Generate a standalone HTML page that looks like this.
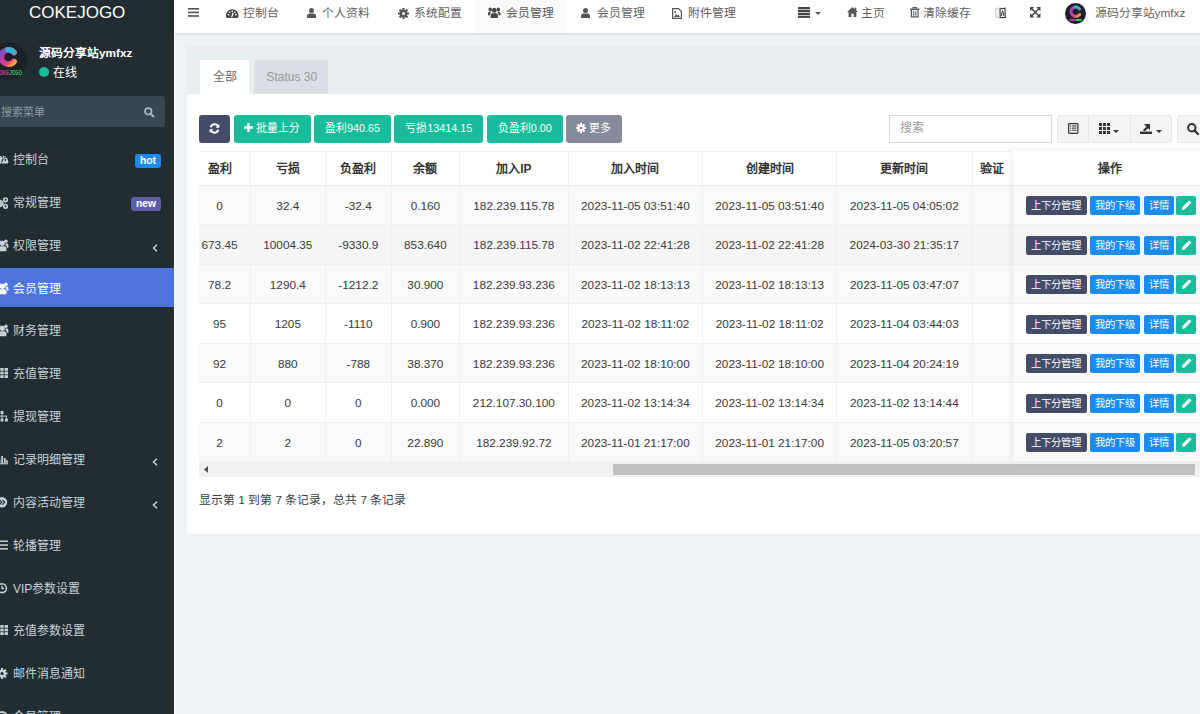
<!DOCTYPE html><html lang="zh-CN"><head><meta charset="utf-8"><style>
*{box-sizing:border-box}
html,body{margin:0;padding:0}
body{width:1200px;height:714px;overflow:hidden;position:relative;background:#f0f3f6;font-family:"Liberation Sans",sans-serif;font-size:12px;color:#333}
.abs{position:absolute;white-space:nowrap}
svg{position:absolute;overflow:visible}
#sidebar{position:absolute;left:0;top:0;width:174px;height:714px;background:#222d32;overflow:hidden}
#whiteline{position:absolute;left:174px;top:0;width:1px;height:714px;background:#fff}
#header{position:absolute;left:175px;top:0;width:1025px;height:35px;background:#fff;border-bottom:2px solid #dde1e5}
.mi{position:absolute;left:0;width:174px;height:39px;color:#c6d2d8}
.mi .t{position:absolute;left:13px;top:12.5px;font-size:12px;line-height:17px;white-space:nowrap}
.mi.active{background:#4e73df;color:#fff}
.badge{position:absolute;color:#fff;font-weight:bold;font-size:10.4px;line-height:14px;text-align:center;border-radius:3px;height:14px}
.nt{position:absolute;top:4.8px;line-height:17px;font-size:11.8px;color:#5e5e5e;white-space:nowrap}
#panel{position:absolute;left:187px;top:46px;width:1013px;height:488px;background:#fff}
#ph{position:absolute;left:0;top:0;width:1014px;height:48px;background:#e8edf0}
.tab{position:absolute;top:14px;height:34px;font-size:12px;line-height:17px}
.btn{position:absolute;top:115px;height:27.5px;border-radius:3px;color:#fff;font-size:10.8px;line-height:27px;text-align:center;white-space:nowrap}
.g{background:#18bc9c}
.ob{position:absolute;height:18.8px;border-radius:2px;color:#fff;font-size:10.4px;line-height:20px;text-align:center;white-space:nowrap}
</style></head><body>
<div id="sidebar">
<div class="abs" style="left:29px;top:3px;font-size:17px;color:#fff;line-height:20px">COKEJOGO</div>
<svg style="left:-11px;top:42px" width="38" height="38" viewBox="0 0 38 38">
<defs><linearGradient id="cg" x1="0" y1="0" x2="0.9" y2="1"><stop offset="0" stop-color="#7a4fd0"/><stop offset="0.45" stop-color="#c040a0"/><stop offset="0.75" stop-color="#e8407a"/><stop offset="1" stop-color="#f0a048"/></linearGradient></defs>
<circle cx="19" cy="19" r="18.7" fill="#1b2126"/>
<path d="M25 10.4 A7.2 7.2 0 1 0 25 19.6" fill="none" stroke="url(#cg)" stroke-width="5.8" stroke-linecap="round"/>
<path d="M25 10.4 A7.2 7.2 0 0 0 18.9 7.8" fill="none" stroke="#3ab0d0" stroke-width="5.4" stroke-linecap="round"/>
<text x="7" y="33" font-family="Liberation Sans" font-weight="bold" font-size="6.6" fill="#c83aa8" textLength="13" lengthAdjust="spacingAndGlyphs">COKE</text>
<text x="20.5" y="33" font-family="Liberation Sans" font-weight="bold" font-size="6.6" fill="#2ecc60" textLength="12.5" lengthAdjust="spacingAndGlyphs">JOGO</text>
</svg>
<div class="abs" style="left:39px;top:45px;font-size:11.8px;font-weight:bold;color:#fff;line-height:16px">源码分享站ymfxz</div>
<div class="abs" style="left:39px;top:67px;width:10px;height:10px;border-radius:50%;background:#18bc9c"></div>
<div class="abs" style="left:53px;top:64.5px;font-size:12px;color:#fff;line-height:17px">在线</div>
<div class="abs" style="left:-10px;top:96px;width:175px;height:31px;background:#374850;border-radius:3px"></div>
<div class="abs" style="left:1px;top:103.5px;font-size:11px;color:#8a9ba3;line-height:17px">搜索菜单</div>
<svg style="left:144px;top:106.5px" width="10.5" height="10.5" viewBox="0 0 12 12"><circle cx="4.9" cy="4.9" r="3.7" fill="none" stroke="#a9b6bc" stroke-width="2"/><path d="M7.6 7.6 L10.8 10.8" stroke="#a9b6bc" stroke-width="2.4" stroke-linecap="round"/></svg>
<div class="mi" style="top:139.4px">
<svg style="left:-4px;top:14.5px" width="12" height="11" viewBox="0 0 12 11"><path d="M0.52 9.5 A6 6 0 1 1 12 9.5 Z" fill="#c6d2d8"/><circle cx="9.5" cy="6" r="0.9" fill="#222d32"/><circle cx="6.2" cy="2.6" r="0.9" fill="#222d32"/><circle cx="8.8" cy="3.6" r="0.8" fill="#222d32"/><path d="M5.6 8.4 L7.2 4.4" stroke="#222d32" stroke-width="1.2"/></svg>
<div class="t">控制台</div>
</div>
<div class="mi" style="top:182.3px">
<svg style="left:-4px;top:14.5px" width="12" height="11" viewBox="0 0 12 11"><g fill="none" stroke="#c6d2d8" stroke-width="1.6"><circle cx="4" cy="6.5" r="2.6"/><circle cx="9.5" cy="2.8" r="1.8"/><circle cx="9.5" cy="9.3" r="1.8"/></g><g fill="#c6d2d8"><rect x="3.2" y="2.8" width="1.6" height="7.4"/><rect x="0.3" y="5.7" width="7.4" height="1.6"/></g></svg>
<div class="t">常规管理</div>
</div>
<div class="mi" style="top:225.2px">
<svg style="left:-4.2px;top:13.5px" width="12.5" height="12.5" viewBox="0 0 12.5 12.5"><g fill="#c6d2d8"><circle cx="6.3" cy="4.3" r="2.6"/><path d="M2.2 12.3 L2.2 9.3 Q2.2 7.2 4.3 7.2 L8.3 7.2 Q10.4 7.2 10.4 9.3 L10.4 12.3 Z"/><circle cx="9.9" cy="2.2" r="1.8"/><path d="M9.4 4.6 L11.2 4.6 Q12.4 4.6 12.4 6 L12.4 8.8 L11 8.8 Q10.8 7 9.6 6.3 Z"/><circle cx="2.7" cy="2.2" r="1.8"/><path d="M3.2 4.6 L1.4 4.6 Q0.2 4.6 0.2 6 L0.2 8.8 L1.6 8.8 Q1.8 7 3 6.3 Z"/></g></svg>
<div class="t">权限管理</div>
<svg style="left:152px;top:19px" width="6" height="8" viewBox="0 0 6 8"><path d="M5 0.8 L1.5 4 L5 7.2" fill="none" stroke="#c6d2d8" stroke-width="1.5"/></svg>
</div>
<div class="mi active" style="top:268.0px">
<svg style="left:-4.2px;top:13.5px" width="12.5" height="12.5" viewBox="0 0 12.5 12.5"><g fill="#fff"><circle cx="6.3" cy="4.3" r="2.6"/><path d="M2.2 12.3 L2.2 9.3 Q2.2 7.2 4.3 7.2 L8.3 7.2 Q10.4 7.2 10.4 9.3 L10.4 12.3 Z"/><circle cx="9.9" cy="2.2" r="1.8"/><path d="M9.4 4.6 L11.2 4.6 Q12.4 4.6 12.4 6 L12.4 8.8 L11 8.8 Q10.8 7 9.6 6.3 Z"/><circle cx="2.7" cy="2.2" r="1.8"/><path d="M3.2 4.6 L1.4 4.6 Q0.2 4.6 0.2 6 L0.2 8.8 L1.6 8.8 Q1.8 7 3 6.3 Z"/></g></svg>
<div class="t">会员管理</div>
</div>
<div class="mi" style="top:310.9px">
<svg style="left:-4.2px;top:13.5px" width="12.5" height="12.5" viewBox="0 0 12.5 12.5"><g fill="#c6d2d8"><circle cx="6.3" cy="4.3" r="2.6"/><path d="M2.2 12.3 L2.2 9.3 Q2.2 7.2 4.3 7.2 L8.3 7.2 Q10.4 7.2 10.4 9.3 L10.4 12.3 Z"/><circle cx="9.9" cy="2.2" r="1.8"/><path d="M9.4 4.6 L11.2 4.6 Q12.4 4.6 12.4 6 L12.4 8.8 L11 8.8 Q10.8 7 9.6 6.3 Z"/><circle cx="2.7" cy="2.2" r="1.8"/><path d="M3.2 4.6 L1.4 4.6 Q0.2 4.6 0.2 6 L0.2 8.8 L1.6 8.8 Q1.8 7 3 6.3 Z"/></g></svg>
<div class="t">财务管理</div>
</div>
<div class="mi" style="top:353.7px">
<svg style="left:-4px;top:14.5px" width="12" height="11" viewBox="0 0 12 11"><g fill="#c6d2d8"><rect x="0" y="0" width="3.4" height="2.8"/><rect x="4.3" y="0" width="3.4" height="2.8"/><rect x="8.6" y="0" width="3.4" height="2.8"/><rect x="0" y="3.6" width="3.4" height="2.8"/><rect x="4.3" y="3.6" width="3.4" height="2.8"/><rect x="8.6" y="3.6" width="3.4" height="2.8"/><rect x="0" y="7.2" width="3.4" height="2.8"/><rect x="4.3" y="7.2" width="3.4" height="2.8"/><rect x="8.6" y="7.2" width="3.4" height="2.8"/></g></svg>
<div class="t">充值管理</div>
</div>
<div class="mi" style="top:396.6px">
<svg style="left:-4px;top:14.5px" width="12" height="11" viewBox="0 0 12 11"><g fill="#c6d2d8"><rect x="4.6" y="0" width="2.8" height="3"/><rect x="0.2" y="7.5" width="2.8" height="3"/><rect x="4.6" y="7.5" width="2.8" height="3"/><rect x="9" y="7.5" width="2.8" height="3"/><rect x="1.2" y="4.6" width="9.6" height="1"/><rect x="1.2" y="4.6" width="0.9" height="3"/><rect x="5.5" y="2.8" width="0.9" height="4.8"/><rect x="9.9" y="4.6" width="0.9" height="3"/></g></svg>
<div class="t">提现管理</div>
</div>
<div class="mi" style="top:439.4px">
<svg style="left:-4px;top:14.5px" width="12" height="11" viewBox="0 0 12 11"><g fill="#c6d2d8"><rect x="0" y="9.2" width="12" height="1.1"/><rect x="0" y="0" width="1.1" height="10.3"/><rect x="2.5" y="5" width="1.8" height="4"/><rect x="5.2" y="2" width="1.8" height="7"/><rect x="7.9" y="4" width="1.8" height="5"/><rect x="10.2" y="6" width="1.5" height="3"/></g></svg>
<div class="t">记录明细管理</div>
<svg style="left:152px;top:19px" width="6" height="8" viewBox="0 0 6 8"><path d="M5 0.8 L1.5 4 L5 7.2" fill="none" stroke="#c6d2d8" stroke-width="1.5"/></svg>
</div>
<div class="mi" style="top:482.2px">
<svg style="left:-4px;top:14.5px" width="12" height="11" viewBox="0 0 12 11"><circle cx="6" cy="5.2" r="5.2" fill="#c6d2d8"/><path d="M3.5 2.8 L5.8 5.2 L3.5 7.6 M6.4 2.8 L8.7 5.2 L6.4 7.6" fill="none" stroke="#222d32" stroke-width="1.2"/></svg>
<div class="t">内容活动管理</div>
<svg style="left:152px;top:19px" width="6" height="8" viewBox="0 0 6 8"><path d="M5 0.8 L1.5 4 L5 7.2" fill="none" stroke="#c6d2d8" stroke-width="1.5"/></svg>
</div>
<div class="mi" style="top:525.1px">
<svg style="left:-4px;top:14.5px" width="12" height="11" viewBox="0 0 12 11"><g fill="#c6d2d8"><rect x="0" y="0.5" width="12" height="1.5"/><rect x="0" y="4.3" width="12" height="1.5"/><rect x="0" y="8.1" width="12" height="1.5"/></g></svg>
<div class="t">轮播管理</div>
</div>
<div class="mi" style="top:568.0px">
<svg style="left:-4px;top:14.5px" width="12" height="11" viewBox="0 0 12 11"><circle cx="6" cy="5.2" r="4.4" fill="none" stroke="#c6d2d8" stroke-width="1.6"/><path d="M6 2.8 L6 5.5 L8 5.5" fill="none" stroke="#c6d2d8" stroke-width="1.3"/></svg>
<div class="t">VIP参数设置</div>
</div>
<div class="mi" style="top:610.8px">
<svg style="left:-4px;top:14.5px" width="12" height="11" viewBox="0 0 12 11"><g fill="#c6d2d8"><rect x="0" y="0" width="3.4" height="2.8"/><rect x="4.3" y="0" width="3.4" height="2.8"/><rect x="8.6" y="0" width="3.4" height="2.8"/><rect x="0" y="3.6" width="3.4" height="2.8"/><rect x="4.3" y="3.6" width="3.4" height="2.8"/><rect x="8.6" y="3.6" width="3.4" height="2.8"/><rect x="0" y="7.2" width="3.4" height="2.8"/><rect x="4.3" y="7.2" width="3.4" height="2.8"/><rect x="8.6" y="7.2" width="3.4" height="2.8"/></g></svg>
<div class="t">充值参数设置</div>
</div>
<div class="mi" style="top:653.7px">
<svg style="left:-4px;top:14.5px" width="12" height="11" viewBox="0 0 12 11"><g fill="#c6d2d8"><circle cx="6" cy="5.5" r="3.8"/><rect x="4.9" y="0" width="2.2" height="11"/><rect x="0.5" y="4.4" width="11" height="2.2"/><rect x="4.9" y="0" width="2.2" height="11" transform="rotate(45 6 5.5)"/><rect x="4.9" y="0" width="2.2" height="11" transform="rotate(-45 6 5.5)"/></g><circle cx="6" cy="5.5" r="1.6" fill="#222d32"/></svg>
<div class="t">邮件消息通知</div>
</div>
<div class="mi" style="top:696.5px">
<svg style="left:-4px;top:14.5px" width="12" height="11" viewBox="0 0 12 11"><circle cx="6" cy="6" r="5" fill="none" stroke="#c6d2d8" stroke-width="1.8"/></svg>
<div class="t">会员管理</div>
</div>
<div class="badge" style="left:135px;top:153.5px;width:26px;background:#1a8cf0">hot</div>
<div class="badge" style="left:131px;top:196.5px;width:30px;background:#605ca8">new</div>
</div>
<div id="whiteline"></div>
<div id="header">
<svg style="left:12.5px;top:8px" width="11" height="9" viewBox="0 0 11 9"><rect x="0" y="0" width="11" height="1.6" fill="#555"/><rect x="0" y="3.6" width="11" height="1.6" fill="#555"/><rect x="0" y="7.2" width="11" height="1.6" fill="#555"/></svg>
<svg style="left:50.5px;top:8.5px" width="12.5" height="9" viewBox="0 0 12.5 9"><path d="M0.52 9 A6.25 6.25 0 1 1 11.98 9 Z" fill="#444"/><circle cx="2.6" cy="5.6" r="0.9" fill="#fff"/><circle cx="6.25" cy="2.3" r="0.9" fill="#fff"/><circle cx="3.6" cy="3.2" r="0.8" fill="#fff"/><circle cx="9.9" cy="5.6" r="0.9" fill="#fff"/><circle cx="8.9" cy="3.2" r="0.8" fill="#fff"/><path d="M5.6 8.2 L7.2 4" stroke="#fff" stroke-width="1.3"/></svg>
<div class="nt" style="left:67.5px">控制台</div>
<svg style="left:132px;top:8px" width="9" height="10" viewBox="0 0 9 10"><circle cx="4.5" cy="2.6" r="2.5" fill="#555"/><path d="M0 10 L0 7.6 Q0 5.6 2.2 5.4 L6.8 5.4 Q9 5.6 9 7.6 L9 10 Z" fill="#555"/></svg>
<div class="nt" style="left:147px">个人资料</div>
<svg style="left:223px;top:7.5px" width="11" height="11" viewBox="0 0 11 11"><g fill="#555"><circle cx="5.5" cy="5.5" r="3.6"/><rect x="4.4" y="0" width="2.2" height="11"/><rect x="0" y="4.4" width="11" height="2.2"/><rect x="4.4" y="0" width="2.2" height="11" transform="rotate(45 5.5 5.5)"/><rect x="4.4" y="0" width="2.2" height="11" transform="rotate(-45 5.5 5.5)"/></g><circle cx="5.5" cy="5.5" r="1.5" fill="#fff"/></svg>
<div class="nt" style="left:238.5px">系统配置</div>
<div class="abs" style="left:299.5px;top:0;width:91.5px;height:33px;background:#f9f9f9"></div>
<svg style="left:313px;top:7px" width="12.5" height="11" viewBox="0 0 12.5 10" preserveAspectRatio="none"><g fill="#444"><circle cx="6.25" cy="3" r="2.3"/><circle cx="2.2" cy="2.2" r="1.7"/><circle cx="10.3" cy="2.2" r="1.7"/><path d="M2.6 10 L2.6 7.8 Q2.6 5.6 4.6 5.6 L7.9 5.6 Q9.9 5.6 9.9 7.8 L9.9 10 Z"/><path d="M0 7.6 L0 6 Q0 4.4 1.5 4.4 L3.2 4.4 Q2 5.4 2 7.2 L2 7.6 Z"/><path d="M12.5 7.6 L12.5 6 Q12.5 4.4 11 4.4 L9.3 4.4 Q10.5 5.4 10.5 7.2 L10.5 7.6 Z"/></g></svg>
<div class="nt" style="left:330.5px;color:#555">会员管理</div>
<svg style="left:406px;top:8px" width="9" height="10" viewBox="0 0 9 10"><circle cx="4.5" cy="2.6" r="2.5" fill="#555"/><path d="M0 10 L0 7.6 Q0 5.6 2.2 5.4 L6.8 5.4 Q9 5.6 9 7.6 L9 10 Z" fill="#555"/></svg>
<div class="nt" style="left:422px">会员管理</div>
<svg style="left:497px;top:7.5px" width="10" height="11" viewBox="0 0 10 11"><path d="M0.6 0.6 L6.5 0.6 L9.4 3.5 L9.4 10.4 L0.6 10.4 Z" fill="none" stroke="#555" stroke-width="1.2"/><path d="M2 9 L4 6 L5.5 7.5 L6.5 6.5 L8 9 Z" fill="#555"/><circle cx="3.2" cy="4" r="1" fill="#555"/></svg>
<div class="nt" style="left:513px">附件管理</div>
<svg style="left:622.5px;top:7px" width="12" height="11" viewBox="0 0 12 11"><g fill="#444"><rect x="0" y="0" width="12" height="2.2"/><rect x="0" y="2.9" width="12" height="2.2"/><rect x="0" y="5.8" width="12" height="2.2"/><rect x="0" y="8.7" width="12" height="2.2"/></g></svg>
<svg style="left:640px;top:12px" width="6" height="3" viewBox="0 0 6 3"><path d="M0 0 L6 0 L3 3 Z" fill="#555"/></svg>
<svg style="left:672px;top:7.2px" width="11" height="10" viewBox="0 0 11 10"><path d="M5.5 0 L11 5 L9.4 5 L9.4 10 L6.6 10 L6.6 6.8 L4.4 6.8 L4.4 10 L1.6 10 L1.6 5 L0 5 Z" fill="#555"/><rect x="7.8" y="0.6" width="1.5" height="2.8" fill="#555"/></svg>
<div class="nt" style="left:686px">主页</div>
<svg style="left:734.6px;top:7.2px" width="9.5" height="10.5" viewBox="0 0 9.5 10.5"><rect x="0" y="1.6" width="9.5" height="1.4" fill="#555"/><path d="M3 1.8 L3 0.6 L6.5 0.6 L6.5 1.8" fill="none" stroke="#555" stroke-width="1.1"/><path d="M1.4 3 L1.4 9.9 L8.1 9.9 L8.1 3" fill="none" stroke="#555" stroke-width="1.2"/><rect x="3.2" y="4" width="1" height="4.8" fill="#555"/><rect x="5.3" y="4" width="1" height="4.8" fill="#555"/></svg>
<div class="nt" style="left:747.5px">清除缓存</div>
<svg style="left:819.5px;top:7px" width="11" height="12" viewBox="0 0 11 12"><path d="M0.5 1.5 L6 1 L6 10.5 L1 10 Z" fill="#f4f4f4" stroke="#bbb" stroke-width="0.8"/><path d="M5 2 L10 1.2 L10.3 10.6 L5.2 10.4 Z" fill="#fff" stroke="#333" stroke-width="1.1"/><path d="M6.2 9 L7.6 3.6 L8.9 9" fill="none" stroke="#333" stroke-width="1"/><path d="M3 11.5 L8 11.5" stroke="#ddd" stroke-width="0.8"/></svg>
<svg style="left:855px;top:7.2px" width="10.5" height="10.5" viewBox="0 0 10.5 10.5"><g fill="#444"><path d="M0 0 L4.2 0 L0 4.2 Z"/><path d="M10.5 0 L6.3 0 L10.5 4.2 Z"/><path d="M0 10.5 L4.2 10.5 L0 6.3 Z"/><path d="M10.5 10.5 L6.3 10.5 L10.5 6.3 Z"/></g><path d="M1.5 1.5 L9 9 M9 1.5 L1.5 9" stroke="#444" stroke-width="1.5"/></svg>
<svg style="left:889.5px;top:2.5px" width="21" height="21" viewBox="0 0 38 38">
<circle cx="19" cy="19" r="19" fill="#1b2126"/>
<path d="M26.4 10.8 A8.5 8.5 0 1 0 26.4 20.6" fill="none" stroke="url(#cg)" stroke-width="5.5" stroke-linecap="round"/>
<path d="M26.4 10.8 A8.5 8.5 0 0 0 18 7.2" fill="none" stroke="#3ab0d0" stroke-width="5" stroke-linecap="round"/>
<rect x="8" y="29" width="10" height="3.5" fill="#c83aa8"/><rect x="19" y="29" width="11" height="3.5" fill="#2ecc60"/>
</svg>
<div class="nt" style="left:919.5px">源码分享站ymfxz</div>
</div>
<div id="panel"><div id="ph"></div></div>
<div class="abs" style="left:200px;top:60px;width:48.6px;height:34px;background:#fff;border-radius:2px 2px 0 0"></div>
<div class="abs" style="left:212.5px;top:69px;line-height:17px;color:#6a6a6a">全部</div>
<div class="abs" style="left:254px;top:60px;width:74px;height:34px;background:#d9dfe5;border-radius:2px 2px 0 0"></div>
<div class="abs" style="left:266.5px;top:69px;line-height:17px;color:#999">Status 30</div>
<div class="btn" style="left:199px;width:31px;background:#444c69"></div>
<svg style="left:208.7px;top:122.5px;transform:scale(-1,1)" width="11" height="11" viewBox="0 0 11 11"><path d="M9.3 4.2 A4 4 0 0 0 2 3.2" fill="none" stroke="#fff" stroke-width="2"/><path d="M0.6 1 L0.6 4.8 L4.4 4.8 Z" fill="#fff"/><path d="M1.7 6.8 A4 4 0 0 0 9 7.8" fill="none" stroke="#fff" stroke-width="2"/><path d="M10.4 10 L10.4 6.2 L6.6 6.2 Z" fill="#fff"/></svg>
<div class="btn g" style="left:233.5px;width:77px"></div>
<svg style="left:244.3px;top:123px" width="9" height="9" viewBox="0 0 9 9"><rect x="3.3" y="0" width="2.4" height="9" fill="#fff"/><rect x="0" y="3.3" width="9" height="2.4" fill="#fff"/></svg>
<div class="abs" style="left:256px;top:120px;line-height:17px;color:#fff;font-size:10.8px">批量上分</div>
<div class="btn g" style="left:314.3px;width:76.5px">盈利940.65</div>
<div class="btn g" style="left:394px;width:89.4px">亏损13414.15</div>
<div class="btn g" style="left:487px;width:75.6px">负盈利0.00</div>
<div class="btn" style="left:566.2px;width:55.6px;background:#858a9d;padding-left:13px">更多</div>
<svg style="left:576px;top:122.7px" width="10" height="10" viewBox="0 0 11 11"><g fill="#fff"><circle cx="5.5" cy="5.5" r="3.6"/><rect x="4.4" y="0" width="2.2" height="11"/><rect x="0" y="4.4" width="11" height="2.2"/><rect x="4.4" y="0" width="2.2" height="11" transform="rotate(45 5.5 5.5)"/><rect x="4.4" y="0" width="2.2" height="11" transform="rotate(-45 5.5 5.5)"/></g><circle cx="5.5" cy="5.5" r="1.5" fill="#858a9d"/></svg>
<div class="abs" style="left:889px;top:115px;width:163px;height:28px;border:1px solid #d2d6de;background:#fff"></div>
<div class="abs" style="left:900px;top:120px;line-height:17px;color:#999">搜索</div>
<div class="abs" style="left:1056.5px;top:115px;width:115px;height:27.5px;border:1px solid #e4e4e4;background:#f4f4f4;border-radius:3px"></div>
<div class="abs" style="left:1088px;top:115px;width:1px;height:27.5px;background:#e4e4e4"></div>
<div class="abs" style="left:1129.5px;top:115px;width:1px;height:27.5px;background:#e4e4e4"></div>
<div class="abs" style="left:1176.5px;top:115px;width:40px;height:27.5px;border:1px solid #e4e4e4;background:#f4f4f4;border-radius:3px"></div>
<svg style="left:1068px;top:123px" width="10.5" height="11" viewBox="0 0 10.5 11"><rect x="0.6" y="0.6" width="9.3" height="9.8" rx="0.8" fill="none" stroke="#333" stroke-width="1.2"/><g fill="#333"><rect x="2" y="2.5" width="1.2" height="1"/><rect x="2" y="4.6" width="1.2" height="1"/><rect x="2" y="6.7" width="1.2" height="1"/><rect x="4" y="2.5" width="4.5" height="1"/><rect x="4" y="4.6" width="4.5" height="1"/><rect x="4" y="6.7" width="4.5" height="1"/></g></svg>
<svg style="left:1098.5px;top:123px" width="11" height="11" viewBox="0 0 11 11"><g fill="#333"><rect x="0" y="0" width="3" height="3"/><rect x="4" y="0" width="3" height="3"/><rect x="8" y="0" width="3" height="3"/><rect x="0" y="4" width="3" height="3"/><rect x="4" y="4" width="3" height="3"/><rect x="8" y="4" width="3" height="3"/><rect x="0" y="8" width="3" height="3"/><rect x="4" y="8" width="3" height="3"/><rect x="8" y="8" width="3" height="3"/></g></svg>
<svg style="left:1113px;top:130px" width="6" height="3" viewBox="0 0 6 3"><path d="M0 0 L6 0 L3 3 Z" fill="#333"/></svg>
<svg style="left:1140px;top:122.5px" width="12" height="11" viewBox="0 0 12 11"><g fill="#333"><rect x="0" y="8.6" width="12" height="2.4"/><path d="M4 1 L10 1 L10 7 L8.2 5.2 L4.5 8.5 L2.9 7 L6.6 3.7 Z"/></g></svg>
<svg style="left:1155.5px;top:130px" width="6" height="3" viewBox="0 0 6 3"><path d="M0 0 L6 0 L3 3 Z" fill="#333"/></svg>
<svg style="left:1187px;top:122.5px" width="12" height="12" viewBox="0 0 12 12"><circle cx="4.8" cy="4.8" r="3.7" fill="none" stroke="#333" stroke-width="2"/><path d="M7.6 7.6 L11 11" stroke="#333" stroke-width="2.4" stroke-linecap="round"/></svg>
<div id="tbl" style="position:absolute;left:199px;top:151px;width:1001px;height:326px;overflow:hidden">
<div class="abs" style="left:0;top:0;width:1001px;height:1px;background:#f0f0f0"></div>
<div class="abs" style="left:0;top:33.5px;width:1001px;height:1.5px;background:#e8e8e8"></div>
<div class="abs" style="left:0;top:34.50px;width:1001px;height:39.5px;background:#f9f9f9;border-bottom:1px solid #f0f0f0"></div>
<div class="abs" style="left:-10.40px;top:46.50px;width:61.80px;text-align:center;line-height:17px;color:#3a3a3a;font-size:11.8px">0</div>
<div class="abs" style="left:51.40px;top:46.50px;width:74.90px;text-align:center;line-height:17px;color:#3a3a3a;font-size:11.8px">32.4</div>
<div class="abs" style="left:126.30px;top:46.50px;width:66.00px;text-align:center;line-height:17px;color:#3a3a3a;font-size:11.8px">-32.4</div>
<div class="abs" style="left:192.30px;top:46.50px;width:68.20px;text-align:center;line-height:17px;color:#3a3a3a;font-size:11.8px">0.160</div>
<div class="abs" style="left:260.50px;top:46.50px;width:108.75px;text-align:center;line-height:17px;color:#3a3a3a;font-size:11.8px">182.239.115.78</div>
<div class="abs" style="left:369.25px;top:46.50px;width:134.25px;text-align:center;line-height:17px;color:#3a3a3a;font-size:11.8px">2023-11-05 03:51:40</div>
<div class="abs" style="left:503.50px;top:46.50px;width:134.30px;text-align:center;line-height:17px;color:#3a3a3a;font-size:11.8px">2023-11-05 03:51:40</div>
<div class="abs" style="left:637.80px;top:46.50px;width:135.20px;text-align:center;line-height:17px;color:#3a3a3a;font-size:11.8px">2023-11-05 04:05:02</div>
<div class="abs" style="left:0;top:74.00px;width:1001px;height:39.5px;background:#f5f5f5;border-bottom:1px solid #f0f0f0"></div>
<div class="abs" style="left:-10.40px;top:86.00px;width:61.80px;text-align:center;line-height:17px;color:#3a3a3a;font-size:11.8px">673.45</div>
<div class="abs" style="left:51.40px;top:86.00px;width:74.90px;text-align:center;line-height:17px;color:#3a3a3a;font-size:11.8px">10004.35</div>
<div class="abs" style="left:126.30px;top:86.00px;width:66.00px;text-align:center;line-height:17px;color:#3a3a3a;font-size:11.8px">-9330.9</div>
<div class="abs" style="left:192.30px;top:86.00px;width:68.20px;text-align:center;line-height:17px;color:#3a3a3a;font-size:11.8px">853.640</div>
<div class="abs" style="left:260.50px;top:86.00px;width:108.75px;text-align:center;line-height:17px;color:#3a3a3a;font-size:11.8px">182.239.115.78</div>
<div class="abs" style="left:369.25px;top:86.00px;width:134.25px;text-align:center;line-height:17px;color:#3a3a3a;font-size:11.8px">2023-11-02 22:41:28</div>
<div class="abs" style="left:503.50px;top:86.00px;width:134.30px;text-align:center;line-height:17px;color:#3a3a3a;font-size:11.8px">2023-11-02 22:41:28</div>
<div class="abs" style="left:637.80px;top:86.00px;width:135.20px;text-align:center;line-height:17px;color:#3a3a3a;font-size:11.8px">2024-03-30 21:35:17</div>
<div class="abs" style="left:0;top:113.50px;width:1001px;height:39.5px;background:#f9f9f9;border-bottom:1px solid #f0f0f0"></div>
<div class="abs" style="left:-10.40px;top:125.50px;width:61.80px;text-align:center;line-height:17px;color:#3a3a3a;font-size:11.8px">78.2</div>
<div class="abs" style="left:51.40px;top:125.50px;width:74.90px;text-align:center;line-height:17px;color:#3a3a3a;font-size:11.8px">1290.4</div>
<div class="abs" style="left:126.30px;top:125.50px;width:66.00px;text-align:center;line-height:17px;color:#3a3a3a;font-size:11.8px">-1212.2</div>
<div class="abs" style="left:192.30px;top:125.50px;width:68.20px;text-align:center;line-height:17px;color:#3a3a3a;font-size:11.8px">30.900</div>
<div class="abs" style="left:260.50px;top:125.50px;width:108.75px;text-align:center;line-height:17px;color:#3a3a3a;font-size:11.8px">182.239.93.236</div>
<div class="abs" style="left:369.25px;top:125.50px;width:134.25px;text-align:center;line-height:17px;color:#3a3a3a;font-size:11.8px">2023-11-02 18:13:13</div>
<div class="abs" style="left:503.50px;top:125.50px;width:134.30px;text-align:center;line-height:17px;color:#3a3a3a;font-size:11.8px">2023-11-02 18:13:13</div>
<div class="abs" style="left:637.80px;top:125.50px;width:135.20px;text-align:center;line-height:17px;color:#3a3a3a;font-size:11.8px">2023-11-05 03:47:07</div>
<div class="abs" style="left:0;top:153.00px;width:1001px;height:39.5px;background:#fff;border-bottom:1px solid #f0f0f0"></div>
<div class="abs" style="left:-10.40px;top:165.00px;width:61.80px;text-align:center;line-height:17px;color:#3a3a3a;font-size:11.8px">95</div>
<div class="abs" style="left:51.40px;top:165.00px;width:74.90px;text-align:center;line-height:17px;color:#3a3a3a;font-size:11.8px">1205</div>
<div class="abs" style="left:126.30px;top:165.00px;width:66.00px;text-align:center;line-height:17px;color:#3a3a3a;font-size:11.8px">-1110</div>
<div class="abs" style="left:192.30px;top:165.00px;width:68.20px;text-align:center;line-height:17px;color:#3a3a3a;font-size:11.8px">0.900</div>
<div class="abs" style="left:260.50px;top:165.00px;width:108.75px;text-align:center;line-height:17px;color:#3a3a3a;font-size:11.8px">182.239.93.236</div>
<div class="abs" style="left:369.25px;top:165.00px;width:134.25px;text-align:center;line-height:17px;color:#3a3a3a;font-size:11.8px">2023-11-02 18:11:02</div>
<div class="abs" style="left:503.50px;top:165.00px;width:134.30px;text-align:center;line-height:17px;color:#3a3a3a;font-size:11.8px">2023-11-02 18:11:02</div>
<div class="abs" style="left:637.80px;top:165.00px;width:135.20px;text-align:center;line-height:17px;color:#3a3a3a;font-size:11.8px">2023-11-04 03:44:03</div>
<div class="abs" style="left:0;top:192.50px;width:1001px;height:39.5px;background:#f9f9f9;border-bottom:1px solid #f0f0f0"></div>
<div class="abs" style="left:-10.40px;top:204.50px;width:61.80px;text-align:center;line-height:17px;color:#3a3a3a;font-size:11.8px">92</div>
<div class="abs" style="left:51.40px;top:204.50px;width:74.90px;text-align:center;line-height:17px;color:#3a3a3a;font-size:11.8px">880</div>
<div class="abs" style="left:126.30px;top:204.50px;width:66.00px;text-align:center;line-height:17px;color:#3a3a3a;font-size:11.8px">-788</div>
<div class="abs" style="left:192.30px;top:204.50px;width:68.20px;text-align:center;line-height:17px;color:#3a3a3a;font-size:11.8px">38.370</div>
<div class="abs" style="left:260.50px;top:204.50px;width:108.75px;text-align:center;line-height:17px;color:#3a3a3a;font-size:11.8px">182.239.93.236</div>
<div class="abs" style="left:369.25px;top:204.50px;width:134.25px;text-align:center;line-height:17px;color:#3a3a3a;font-size:11.8px">2023-11-02 18:10:00</div>
<div class="abs" style="left:503.50px;top:204.50px;width:134.30px;text-align:center;line-height:17px;color:#3a3a3a;font-size:11.8px">2023-11-02 18:10:00</div>
<div class="abs" style="left:637.80px;top:204.50px;width:135.20px;text-align:center;line-height:17px;color:#3a3a3a;font-size:11.8px">2023-11-04 20:24:19</div>
<div class="abs" style="left:0;top:232.00px;width:1001px;height:39.5px;background:#fff;border-bottom:1px solid #f0f0f0"></div>
<div class="abs" style="left:-10.40px;top:244.00px;width:61.80px;text-align:center;line-height:17px;color:#3a3a3a;font-size:11.8px">0</div>
<div class="abs" style="left:51.40px;top:244.00px;width:74.90px;text-align:center;line-height:17px;color:#3a3a3a;font-size:11.8px">0</div>
<div class="abs" style="left:126.30px;top:244.00px;width:66.00px;text-align:center;line-height:17px;color:#3a3a3a;font-size:11.8px">0</div>
<div class="abs" style="left:192.30px;top:244.00px;width:68.20px;text-align:center;line-height:17px;color:#3a3a3a;font-size:11.8px">0.000</div>
<div class="abs" style="left:260.50px;top:244.00px;width:108.75px;text-align:center;line-height:17px;color:#3a3a3a;font-size:11.8px">212.107.30.100</div>
<div class="abs" style="left:369.25px;top:244.00px;width:134.25px;text-align:center;line-height:17px;color:#3a3a3a;font-size:11.8px">2023-11-02 13:14:34</div>
<div class="abs" style="left:503.50px;top:244.00px;width:134.30px;text-align:center;line-height:17px;color:#3a3a3a;font-size:11.8px">2023-11-02 13:14:34</div>
<div class="abs" style="left:637.80px;top:244.00px;width:135.20px;text-align:center;line-height:17px;color:#3a3a3a;font-size:11.8px">2023-11-02 13:14:44</div>
<div class="abs" style="left:0;top:271.50px;width:1001px;height:39.5px;background:#f9f9f9;border-bottom:1px solid #f0f0f0"></div>
<div class="abs" style="left:-10.40px;top:283.50px;width:61.80px;text-align:center;line-height:17px;color:#3a3a3a;font-size:11.8px">2</div>
<div class="abs" style="left:51.40px;top:283.50px;width:74.90px;text-align:center;line-height:17px;color:#3a3a3a;font-size:11.8px">2</div>
<div class="abs" style="left:126.30px;top:283.50px;width:66.00px;text-align:center;line-height:17px;color:#3a3a3a;font-size:11.8px">0</div>
<div class="abs" style="left:192.30px;top:283.50px;width:68.20px;text-align:center;line-height:17px;color:#3a3a3a;font-size:11.8px">22.890</div>
<div class="abs" style="left:260.50px;top:283.50px;width:108.75px;text-align:center;line-height:17px;color:#3a3a3a;font-size:11.8px">182.239.92.72</div>
<div class="abs" style="left:369.25px;top:283.50px;width:134.25px;text-align:center;line-height:17px;color:#3a3a3a;font-size:11.8px">2023-11-01 21:17:00</div>
<div class="abs" style="left:503.50px;top:283.50px;width:134.30px;text-align:center;line-height:17px;color:#3a3a3a;font-size:11.8px">2023-11-01 21:17:00</div>
<div class="abs" style="left:637.80px;top:283.50px;width:135.20px;text-align:center;line-height:17px;color:#3a3a3a;font-size:11.8px">2023-11-05 03:20:57</div>
<div class="abs" style="left:-10.40px;top:9.50px;width:61.80px;text-align:center;line-height:17px;color:#333;font-weight:bold">盈利</div>
<div class="abs" style="left:51.40px;top:9.50px;width:74.90px;text-align:center;line-height:17px;color:#333;font-weight:bold">亏损</div>
<div class="abs" style="left:126.30px;top:9.50px;width:66.00px;text-align:center;line-height:17px;color:#333;font-weight:bold">负盈利</div>
<div class="abs" style="left:192.30px;top:9.50px;width:68.20px;text-align:center;line-height:17px;color:#333;font-weight:bold">余额</div>
<div class="abs" style="left:260.50px;top:9.50px;width:108.75px;text-align:center;line-height:17px;color:#333;font-weight:bold">加入IP</div>
<div class="abs" style="left:369.25px;top:9.50px;width:134.25px;text-align:center;line-height:17px;color:#333;font-weight:bold">加入时间</div>
<div class="abs" style="left:503.50px;top:9.50px;width:134.30px;text-align:center;line-height:17px;color:#333;font-weight:bold">创建时间</div>
<div class="abs" style="left:637.80px;top:9.50px;width:135.20px;text-align:center;line-height:17px;color:#333;font-weight:bold">更新时间</div>
<div class="abs" style="left:773.00px;top:9.50px;width:40.50px;text-align:center;line-height:17px;color:#333;font-weight:bold">验证</div>
<div class="abs" style="left:50.90px;top:1px;width:1px;height:310.5px;background:#f0f0f0"></div>
<div class="abs" style="left:125.80px;top:1px;width:1px;height:310.5px;background:#f0f0f0"></div>
<div class="abs" style="left:191.80px;top:1px;width:1px;height:310.5px;background:#f0f0f0"></div>
<div class="abs" style="left:260.00px;top:1px;width:1px;height:310.5px;background:#f0f0f0"></div>
<div class="abs" style="left:368.75px;top:1px;width:1px;height:310.5px;background:#f0f0f0"></div>
<div class="abs" style="left:503.00px;top:1px;width:1px;height:310.5px;background:#f0f0f0"></div>
<div class="abs" style="left:637.30px;top:1px;width:1px;height:310.5px;background:#f0f0f0"></div>
<div class="abs" style="left:772.50px;top:1px;width:1px;height:310.5px;background:#f0f0f0"></div>
<div class="abs" style="left:0;top:310.5px;width:1001px;height:15px;background:#f1f1f1"></div>
<svg style="left:4.5px;top:315px" width="4" height="7" viewBox="0 0 4 7"><path d="M4 0 L0 3.5 L4 7 Z" fill="#505050"/></svg>
<div class="abs" style="left:414px;top:313px;width:582px;height:11px;background:#c1c1c1"></div>
<div class="abs" style="left:813.5px;top:0;width:300px;height:310.5px;background:#fff;box-shadow:-2px 0 6px rgba(0,0,0,0.07)"></div>
<div class="abs" style="left:813.5px;top:33.5px;width:300px;height:1.5px;background:#e8e8e8"></div>
<div class="abs" style="left:898.5px;top:9.50px;line-height:17px;color:#333;font-weight:bold">操作</div>
<div class="abs" style="left:813.5px;top:34.50px;width:300px;height:39.5px;background:#f9f9f9;border-bottom:1px solid #f0f0f0"></div>
<div class="ob" style="left:827px;top:45.30px;width:60.7px;background:#444c69">上下分管理</div>
<div class="ob" style="left:891px;top:45.30px;width:50.3px;background:#1a8cf0">我的下级</div>
<div class="ob" style="left:944.8px;top:45.30px;width:30px;background:#1a8cf0">详情</div>
<div class="ob" style="left:977.3px;top:45.30px;width:19.5px;background:#18bc9c"><svg style="left:0;top:0" width="19.5" height="18.8" viewBox="0 0 19.5 18.8"><g transform="translate(10.1 9.7) rotate(-45) scale(0.84)"><path d="M-4.6 -1.9 L6.4 -1.9 Q7.2 -1.9 7.2 -1.1 L7.2 1.1 Q7.2 1.9 6.4 1.9 L-4.6 1.9 L-7 0 Z" fill="#fff"/><path d="M4.3 -1.9 L4.3 1.9" stroke="#18bc9c" stroke-width="0.6"/></g></svg></div>
<div class="abs" style="left:813.5px;top:74.00px;width:300px;height:39.5px;background:#f5f5f5;border-bottom:1px solid #f0f0f0"></div>
<div class="ob" style="left:827px;top:84.80px;width:60.7px;background:#444c69">上下分管理</div>
<div class="ob" style="left:891px;top:84.80px;width:50.3px;background:#1a8cf0">我的下级</div>
<div class="ob" style="left:944.8px;top:84.80px;width:30px;background:#1a8cf0">详情</div>
<div class="ob" style="left:977.3px;top:84.80px;width:19.5px;background:#18bc9c"><svg style="left:0;top:0" width="19.5" height="18.8" viewBox="0 0 19.5 18.8"><g transform="translate(10.1 9.7) rotate(-45) scale(0.84)"><path d="M-4.6 -1.9 L6.4 -1.9 Q7.2 -1.9 7.2 -1.1 L7.2 1.1 Q7.2 1.9 6.4 1.9 L-4.6 1.9 L-7 0 Z" fill="#fff"/><path d="M4.3 -1.9 L4.3 1.9" stroke="#18bc9c" stroke-width="0.6"/></g></svg></div>
<div class="abs" style="left:813.5px;top:113.50px;width:300px;height:39.5px;background:#f9f9f9;border-bottom:1px solid #f0f0f0"></div>
<div class="ob" style="left:827px;top:124.30px;width:60.7px;background:#444c69">上下分管理</div>
<div class="ob" style="left:891px;top:124.30px;width:50.3px;background:#1a8cf0">我的下级</div>
<div class="ob" style="left:944.8px;top:124.30px;width:30px;background:#1a8cf0">详情</div>
<div class="ob" style="left:977.3px;top:124.30px;width:19.5px;background:#18bc9c"><svg style="left:0;top:0" width="19.5" height="18.8" viewBox="0 0 19.5 18.8"><g transform="translate(10.1 9.7) rotate(-45) scale(0.84)"><path d="M-4.6 -1.9 L6.4 -1.9 Q7.2 -1.9 7.2 -1.1 L7.2 1.1 Q7.2 1.9 6.4 1.9 L-4.6 1.9 L-7 0 Z" fill="#fff"/><path d="M4.3 -1.9 L4.3 1.9" stroke="#18bc9c" stroke-width="0.6"/></g></svg></div>
<div class="abs" style="left:813.5px;top:153.00px;width:300px;height:39.5px;background:#fff;border-bottom:1px solid #f0f0f0"></div>
<div class="ob" style="left:827px;top:163.80px;width:60.7px;background:#444c69">上下分管理</div>
<div class="ob" style="left:891px;top:163.80px;width:50.3px;background:#1a8cf0">我的下级</div>
<div class="ob" style="left:944.8px;top:163.80px;width:30px;background:#1a8cf0">详情</div>
<div class="ob" style="left:977.3px;top:163.80px;width:19.5px;background:#18bc9c"><svg style="left:0;top:0" width="19.5" height="18.8" viewBox="0 0 19.5 18.8"><g transform="translate(10.1 9.7) rotate(-45) scale(0.84)"><path d="M-4.6 -1.9 L6.4 -1.9 Q7.2 -1.9 7.2 -1.1 L7.2 1.1 Q7.2 1.9 6.4 1.9 L-4.6 1.9 L-7 0 Z" fill="#fff"/><path d="M4.3 -1.9 L4.3 1.9" stroke="#18bc9c" stroke-width="0.6"/></g></svg></div>
<div class="abs" style="left:813.5px;top:192.50px;width:300px;height:39.5px;background:#f9f9f9;border-bottom:1px solid #f0f0f0"></div>
<div class="ob" style="left:827px;top:203.30px;width:60.7px;background:#444c69">上下分管理</div>
<div class="ob" style="left:891px;top:203.30px;width:50.3px;background:#1a8cf0">我的下级</div>
<div class="ob" style="left:944.8px;top:203.30px;width:30px;background:#1a8cf0">详情</div>
<div class="ob" style="left:977.3px;top:203.30px;width:19.5px;background:#18bc9c"><svg style="left:0;top:0" width="19.5" height="18.8" viewBox="0 0 19.5 18.8"><g transform="translate(10.1 9.7) rotate(-45) scale(0.84)"><path d="M-4.6 -1.9 L6.4 -1.9 Q7.2 -1.9 7.2 -1.1 L7.2 1.1 Q7.2 1.9 6.4 1.9 L-4.6 1.9 L-7 0 Z" fill="#fff"/><path d="M4.3 -1.9 L4.3 1.9" stroke="#18bc9c" stroke-width="0.6"/></g></svg></div>
<div class="abs" style="left:813.5px;top:232.00px;width:300px;height:39.5px;background:#fff;border-bottom:1px solid #f0f0f0"></div>
<div class="ob" style="left:827px;top:242.80px;width:60.7px;background:#444c69">上下分管理</div>
<div class="ob" style="left:891px;top:242.80px;width:50.3px;background:#1a8cf0">我的下级</div>
<div class="ob" style="left:944.8px;top:242.80px;width:30px;background:#1a8cf0">详情</div>
<div class="ob" style="left:977.3px;top:242.80px;width:19.5px;background:#18bc9c"><svg style="left:0;top:0" width="19.5" height="18.8" viewBox="0 0 19.5 18.8"><g transform="translate(10.1 9.7) rotate(-45) scale(0.84)"><path d="M-4.6 -1.9 L6.4 -1.9 Q7.2 -1.9 7.2 -1.1 L7.2 1.1 Q7.2 1.9 6.4 1.9 L-4.6 1.9 L-7 0 Z" fill="#fff"/><path d="M4.3 -1.9 L4.3 1.9" stroke="#18bc9c" stroke-width="0.6"/></g></svg></div>
<div class="abs" style="left:813.5px;top:271.50px;width:300px;height:39.5px;background:#f9f9f9;border-bottom:1px solid #f0f0f0"></div>
<div class="ob" style="left:827px;top:282.30px;width:60.7px;background:#444c69">上下分管理</div>
<div class="ob" style="left:891px;top:282.30px;width:50.3px;background:#1a8cf0">我的下级</div>
<div class="ob" style="left:944.8px;top:282.30px;width:30px;background:#1a8cf0">详情</div>
<div class="ob" style="left:977.3px;top:282.30px;width:19.5px;background:#18bc9c"><svg style="left:0;top:0" width="19.5" height="18.8" viewBox="0 0 19.5 18.8"><g transform="translate(10.1 9.7) rotate(-45) scale(0.84)"><path d="M-4.6 -1.9 L6.4 -1.9 Q7.2 -1.9 7.2 -1.1 L7.2 1.1 Q7.2 1.9 6.4 1.9 L-4.6 1.9 L-7 0 Z" fill="#fff"/><path d="M4.3 -1.9 L4.3 1.9" stroke="#18bc9c" stroke-width="0.6"/></g></svg></div>
</div>
<div class="abs" style="left:1008px;top:144px;width:192px;height:7px;background:linear-gradient(to bottom,rgba(0,0,0,0),rgba(0,0,0,0.035))"></div>
<div class="abs" style="left:199px;top:492px;line-height:17px;color:#3c3c3c;font-size:11.8px">显示第 1 到第 7 条记录，总共 7 条记录</div>
</body></html>
